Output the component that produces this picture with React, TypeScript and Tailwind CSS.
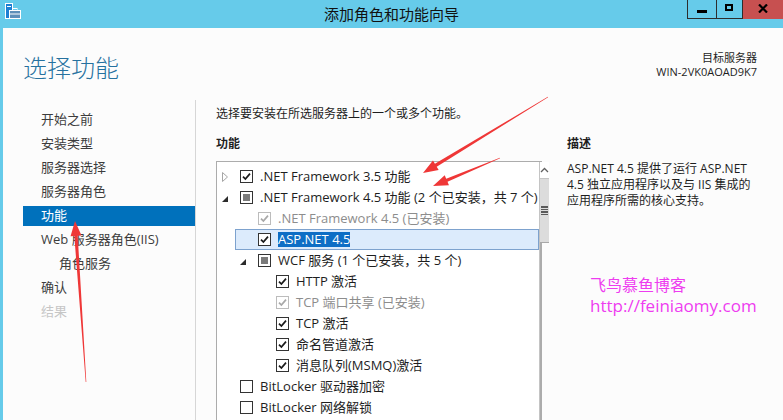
import React from 'react';

type Row = {
  level: number;
  label: string;
  toggle?: 'open' | 'closed';
  state: 'checked' | 'partial' | 'empty';
  disabled?: boolean;
  selected?: boolean;
};

const rows: Row[] = [
  { level: 0, label: '.NET Framework 3.5 功能', toggle: 'closed', state: 'checked' },
  { level: 0, label: '.NET Framework 4.5 功能 (2 个已安装，共 7 个)', toggle: 'open', state: 'partial' },
  { level: 1, label: '.NET Framework 4.5 (已安装)', state: 'checked', disabled: true },
  { level: 1, label: 'ASP.NET 4.5', state: 'checked', selected: true },
  { level: 1, label: 'WCF 服务 (1 个已安装，共 5 个)', toggle: 'open', state: 'partial' },
  { level: 2, label: 'HTTP 激活', state: 'checked' },
  { level: 2, label: 'TCP 端口共享 (已安装)', state: 'checked', disabled: true },
  { level: 2, label: 'TCP 激活', state: 'checked' },
  { level: 2, label: '命名管道激活', state: 'checked' },
  { level: 2, label: '消息队列(MSMQ)激活', state: 'checked' },
  { level: 0, label: 'BitLocker 驱动器加密', state: 'empty' },
  { level: 0, label: 'BitLocker 网络解锁', state: 'empty' },
];

const indent = ['pl-0', 'pl-[18px]', 'pl-[36px]'];

const steps = [
  { label: '开始之前' },
  { label: '安装类型' },
  { label: '服务器选择' },
  { label: '服务器角色' },
  { label: '功能', active: true },
  { label: 'Web 服务器角色(IIS)' },
  { label: '角色服务', sub: true },
  { label: '确认' },
  { label: '结果', muted: true },
];

function CheckBox({ state, disabled }: { state: Row['state']; disabled?: boolean }) {
  return (
    <span
      className={`flex h-[13px] w-[13px] shrink-0 items-center justify-center border bg-white ${
        disabled ? 'border-[#bcbcbc]' : 'border-[#333333]'
      }`}
    >
      {state === 'checked' && (
        <svg width="11" height="11" viewBox="0 0 11 11">
          <path
            d="M2 5.6 L4.4 8 L9 2.6"
            fill="none"
            stroke={disabled ? '#a8a8a8' : '#1a1a1a'}
            strokeWidth="1.7"
          />
        </svg>
      )}
      {state === 'partial' && <span className="h-[7px] w-[7px] bg-[#7b7b7b]" />}
    </span>
  );
}

function Toggle({ kind }: { kind?: Row['toggle'] }) {
  return (
    <span className="flex w-[18px] shrink-0 items-center">
      {kind === 'closed' && (
        <svg width="6" height="10" viewBox="0 0 6 10">
          <polygon points="0.5,0.5 5.5,5 0.5,9.5" fill="none" stroke="#a6a6a6" />
        </svg>
      )}
      {kind === 'open' && (
        <svg width="6" height="6" viewBox="0 0 6 6" className="mt-[3px]">
          <polygon points="6,0 6,6 0,6" fill="#2b2b2b" />
        </svg>
      )}
    </span>
  );
}

function Arrow({ x1, y1, x2, y2 }: { x1: number; y1: number; x2: number; y2: number }) {
  const dx = x2 - x1;
  const dy = y2 - y1;
  const len = Math.hypot(dx, dy);
  const ux = dx / len;
  const uy = dy / len;
  const nx = -uy;
  const ny = ux;
  const hl = 15;
  const hw = 5.5;
  const bx = x2 - ux * hl;
  const by = y2 - uy * hl;
  const tail = 0.3;
  const neck = 1.7;
  const pts = [
    [x1 + nx * tail, y1 + ny * tail],
    [bx + nx * neck, by + ny * neck],
    [bx + nx * hw, by + ny * hw],
    [x2, y2],
    [bx - nx * hw, by - ny * hw],
    [bx - nx * neck, by - ny * neck],
    [x1 - nx * tail, y1 - ny * tail],
  ];
  return <polygon points={pts.map((p) => p.join(',')).join(' ')} fill="#ef3737" />;
}

export default function App() {
  return (
    <div className="relative h-[420px] w-[783px] overflow-hidden bg-[#fcfcfc] font-['Open_Sans','Noto_Sans_CJK_SC',sans-serif] text-[#1e1e1e]">
      {/* title bar */}
      <div className="flex h-[28px] justify-between bg-[#66cbea]">
        <div className="w-[96px] shrink-0 pl-[5px] pt-[3px]">
          <svg width="17" height="17" viewBox="0 0 17 17">
            <rect x="0.5" y="0.5" width="7" height="15" fill="#1d7fd3" stroke="#ffffff" />
            <rect x="2" y="3" width="4" height="1" fill="#ffffff" />
            <rect x="4.5" y="7.5" width="11" height="8" fill="#5d8fb9" stroke="#ffffff" />
            <rect x="8" y="5.5" width="4" height="2" fill="none" stroke="#ffffff" />
            <rect x="5" y="10.5" width="10" height="1" fill="#ffffff" />
          </svg>
        </div>
        <div className="flex items-center text-[15px] text-[#111111]">添加角色和功能向导</div>
        <div className="flex h-[19px] w-[96px] shrink-0">
          <div className="flex h-full w-[29px] items-center justify-center border-b border-l border-[#2d2d2d]">
            <span className="mt-[5px] h-[3px] w-[10px] bg-black" />
          </div>
          <div className="flex h-full w-[26px] items-center justify-center border-b border-l border-[#2d2d2d]">
            <span className="mb-[3px] h-[7px] w-[8px] border-2 border-black" />
          </div>
          <div className="flex h-full flex-1 items-center justify-center border-l border-[#2d2d2d] bg-[rgb(199,80,80)]">
            <svg width="10" height="9" viewBox="0 0 10 9" className="mb-[2px]">
              <path d="M1 0.5 L9 8.5 M9 0.5 L1 8.5" stroke="#000000" strokeWidth="2.2" />
            </svg>
          </div>
        </div>
      </div>

      <div className="flex h-[392px] flex-col border-l-[3px] border-[#66cbea]">
        {/* header */}
        <div className="flex h-[72px] shrink-0 items-start justify-between pr-[26px] pt-[22px]">
          <div className="pl-[20px] text-[24px] font-light leading-[36px] text-[#26719f]">选择功能</div>
          <div className="pt-[1px] text-right text-[11px] leading-[14px] text-[#1e1e1e]">
            <div>目标服务器</div>
            <div>WIN-2VK0AOAD9K7</div>
          </div>
        </div>

        <div className="flex flex-1">
          {/* steps */}
          <div className="w-[192px] shrink-0 pl-[20px] pt-[10px]">
            {steps.map((s) => (
              <div
                key={s.label}
                className={`mb-[4px] flex h-[20px] items-center text-[13px] ${s.sub ? 'pl-[36px]' : 'pl-[18px]'} ${
                  s.active ? 'bg-[#0071bc] text-white' : s.muted ? 'text-[#c6c6c6]' : 'text-[#3c3c3c]'
                }`}
              >
                {s.label}
              </div>
            ))}
          </div>
          <div className="w-px bg-[#d6d6d6]" />

          {/* content */}
          <div className="flex-1 pl-[20px] pt-[6px]">
            <div className="text-[12px] leading-[16px]">选择要安装在所选服务器上的一个或多个功能。</div>
            <div className="flex">
              <div className="w-[326px] shrink-0">
                <div className="mt-[14px] text-[12px] font-bold leading-[16px]">功能</div>
                <div className="mt-[9px] flex h-[280px] border border-r-2 border-[#acacac] bg-white">
                  <div className="flex-1 pt-[4px]">
                    {rows.map((r) => (
                      <div key={r.label} className={`h-[21px] ${indent[r.level]}`}>
                        <div
                          className={`flex h-full items-center border pl-[4px] ${
                            r.selected ? 'border-[#7da2ce] bg-[#dcebfc]' : 'border-transparent'
                          }`}
                        >
                          <Toggle kind={r.toggle} />
                          <CheckBox state={r.state} disabled={r.disabled} />
                          <span
                            className={`ml-[7px] whitespace-nowrap text-[13px] leading-[15px] ${
                              r.selected ? 'bg-[#0e6ec5] text-white' : r.disabled ? 'text-[#8d8d8d]' : 'text-[#1e1e1e]'
                            }`}
                          >
                            {r.label}
                          </span>
                        </div>
                      </div>
                    ))}
                  </div>
                  <div className="flex w-[17px] flex-col border-l border-[#c4c4c4]">
                    <div className="flex h-[17px] items-center justify-center border-b border-[#c4c4c4] bg-white">
                      <svg width="9" height="6" viewBox="0 0 9 6">
                        <path d="M1 5 L4.5 1.5 L8 5" fill="none" stroke="#606060" strokeWidth="1.3" />
                      </svg>
                    </div>
                    <div className="flex h-[64px] flex-col items-center justify-center gap-[1px] border-b border-[#a8a8a8] bg-[#dcdcdc]">
                      <span className="h-[1.5px] w-[7px] bg-[#5a5a5a]" />
                      <span className="h-[1.5px] w-[7px] bg-[#5a5a5a]" />
                      <span className="h-[1.5px] w-[7px] bg-[#5a5a5a]" />
                      <span className="h-[1.5px] w-[7px] bg-[#5a5a5a]" />
                    </div>
                  </div>
                </div>
              </div>

              <div className="ml-[25px]">
                <div className="mt-[14px] text-[12px] font-bold leading-[16px]">描述</div>
                <div className="mt-[9px] whitespace-nowrap text-[12px] leading-[16px]">
                  <div>ASP.NET 4.5 提供了运行 ASP.NET</div>
                  <div>4.5 独立应用程序以及与 IIS 集成的</div>
                  <div>应用程序所需的核心支持。</div>
                </div>
                <div className="ml-[23px] mt-[66px] text-[#ee3cf0]">
                  <div className="text-[16px] leading-[20px]">飞鸟慕鱼博客</div>
                  <div className="text-[17px] leading-[22px]">http://feiniaomy.com</div>
                </div>
              </div>
            </div>
          </div>
        </div>
      </div>

      {/* annotation arrows */}
      <svg className="pointer-events-none absolute left-0 top-0" width="783" height="420" viewBox="0 0 783 420">
        <Arrow x1={548} y1={97} x2={423} y2={173} />
        <Arrow x1={500} y1={158} x2={433} y2={186} />
        <Arrow x1={86} y1={382} x2={75} y2={221} />
      </svg>
    </div>
  );
}
